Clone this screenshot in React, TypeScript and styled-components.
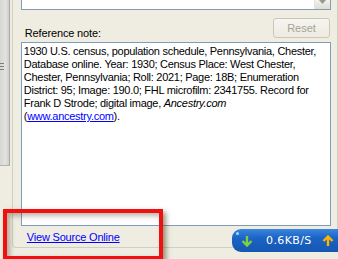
import styled, { createGlobalStyle } from "styled-components";

// #region ##################################################################################### GLOBAL
const Global = createGlobalStyle`
  html, body {
    margin: 0;
    padding: 0;
    background: #efede1;
  }
  body {
    font-family: "Liberation Sans", Arial, sans-serif;
    font-size: 11px;
  }
`;
// #endregion

// #region ##################################################################################### STYLES
const Page = styled.div`
  position: relative;
  width: 338px;
  height: 259px;
  overflow: hidden;
  display: flex;
  align-items: flex-start;
  background: #efede1;
`;

const SideStrip = styled.div`
  width: 9px;
  height: 165px;
  display: flex;
  flex-direction: column;
  background: linear-gradient(to right, #d6d6d3, #e2e2df 60%, #cfcfcc);
  border-right: 1px solid #a9a9a4;
  border-bottom: 1px solid #b4b4ae;
`;

const Grip = styled.div`
  margin-top: 63px;
  width: 4px;
  height: 7px;
  background: repeating-linear-gradient(
    to bottom,
    #7d7d7a 0 1px,
    transparent 1px 3px
  );
`;

const GroupBox = styled.div`
  margin-left: 2px;
  width: 317px;
  height: 247px;
  padding: 0 6px 0 8px;
  border: 1px solid #d0d0bf;
  border-top: none;
  border-radius: 0 0 4px 4px;
  display: flex;
  flex-direction: column;
`;

const TopBox = styled.div`
  height: 9px;
  display: flex;
  justify-content: flex-end;
  background: #fff;
  border: 1px solid #7f9db9;
  border-top: none;
`;

const ScrollButton = styled.div`
  width: 15px;
  height: 9px;
  display: flex;
  justify-content: center;
  background: linear-gradient(to bottom, #f3f2ec, #dedcd3);
  border-left: 1px solid #e6e4dc;
`;

const HeaderRow = styled.div`
  margin-top: 8px;
  height: 20px;
  display: flex;
  align-items: flex-end;
  justify-content: space-between;
`;

const Label = styled.span`
  margin: 0 0 -2px 4px;
  line-height: 13px;
  color: #000;
  letter-spacing: -0.15px;
`;

const ResetButton = styled.button`
  width: 57px;
  height: 20px;
  margin-right: 1px;
  padding: 0;
  font-family: "Liberation Sans", Arial, sans-serif;
  font-size: 11px;
  color: #a5a399;
  background: linear-gradient(to bottom, #f6f5f0, #eceae1);
  border: 1px solid #c9c7ba;
  border-radius: 3px;
`;

const NoteBox = styled.div`
  margin-top: 4px;
  height: 180px;
  padding: 2px 2px 0 2px;
  background: #fff;
  border: 1px solid #7f9db9;
  line-height: 13px;
  white-space: nowrap;
  color: #000;
  letter-spacing: -0.28px;
`;

const Italic = styled.i`
  font-style: italic;
`;

const Link = styled.a<{ $indent?: number }>`
  color: #0000ff;
  text-decoration: underline;
  margin-left: ${(p) => p.$indent ?? 0}px;
  cursor: pointer;
`;

const LinkRow = styled.div`
  margin-top: 5px;
  line-height: 13px;
  letter-spacing: -0.2px;
`;

const Highlight = styled.div`
  position: absolute;
  left: 3px;
  top: 209px;
  width: 152px;
  height: 43px;
  border: 4px solid #f01010;
  box-shadow: 3px 3px 5px rgba(60, 50, 20, 0.5),
    inset 3px 3px 5px rgba(60, 50, 20, 0.35);
  pointer-events: none;
`;

const SpeedPill = styled.div`
  position: absolute;
  right: 0;
  top: 229px;
  width: 97px;
  height: 23px;
  padding-left: 9px;
  display: flex;
  align-items: center;
  border-radius: 9px 0 0 9px;
  background: linear-gradient(to bottom, #3a86e0, #1b63c4 40%, #1557b3);
  color: #fff;
  font-family: "DejaVu Sans", sans-serif;
  font-size: 11px;
  letter-spacing: 0.4px;
`;

const Dot = styled.span`
  position: absolute;
  left: 4px;
  top: 3px;
  width: 3px;
  height: 3px;
  border-radius: 50%;
  background: #8fe4ff;
`;

const Speed = styled.span`
  margin: 0 10px 0 13px;
`;
// #endregion

// #region ##################################################################################### ICONS
const DownArrow = () => (
  <svg width="12" height="12" viewBox="0 0 12 12">
    <path d="M6 1 V10 M1.5 6 L6 10.5 L10.5 6" stroke="#7fd23a" strokeWidth="2.4" fill="none" />
  </svg>
);

const UpArrow = () => (
  <svg width="12" height="12" viewBox="0 0 12 12">
    <path d="M6 11 V2 M1.5 6 L6 1.5 L10.5 6" stroke="#ffb400" strokeWidth="2.4" fill="none" />
  </svg>
);

const ScrollArrow = () => (
  <svg width="7" height="5" viewBox="0 0 7 5">
    <path d="M0 0 H7 L3.5 4 Z" fill="#9a9a94" />
  </svg>
);
// #endregion

// #region ##################################################################################### COMPONENT
const App = () => {
  return (
    <Page>
      <Global />
      <SideStrip>
        <Grip />
      </SideStrip>

      <GroupBox>
        <TopBox>
          <ScrollButton>
            <ScrollArrow />
          </ScrollButton>
        </TopBox>

        <HeaderRow>
          <Label>Reference note:</Label>
          <ResetButton disabled>Reset</ResetButton>
        </HeaderRow>

        <NoteBox>
          1930 U.S. census, population schedule, Pennsylvania, Chester,
          <br />
          Database online. Year: 1930; Census Place: West Chester,
          <br />
          Chester, Pennsylvania; Roll: 2021; Page: 18B; Enumeration
          <br />
          District: 95; Image: 190.0; FHL microfilm: 2341755. Record for
          <br />
          Frank D Strode; digital image, <Italic>Ancestry.com</Italic>
          <br />
          (<Link>www.ancestry.com</Link>).
        </NoteBox>

        <LinkRow>
          <Link $indent={6}>View Source Online</Link>
        </LinkRow>
      </GroupBox>

      <Highlight />

      <SpeedPill>
        <Dot />
        <DownArrow />
        <Speed>0.6KB/S</Speed>
        <UpArrow />
      </SpeedPill>
    </Page>
  );
};
// #endregion

// #region ##################################################################################### EXPORTS
export default App;
// #endregion
